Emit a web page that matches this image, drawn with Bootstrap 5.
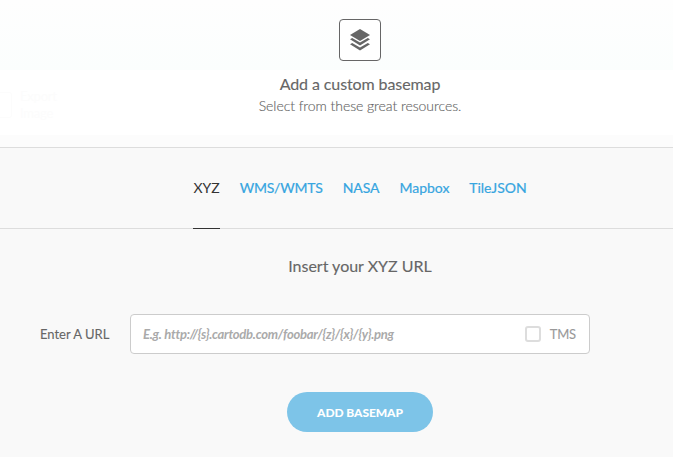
<!DOCTYPE html>
<html lang="en">
<head>
<meta charset="utf-8">
<meta name="viewport" content="width=device-width, initial-scale=1">
<title>Add a custom basemap</title>
<link href="https://cdn.jsdelivr.net/npm/bootstrap@5.3.0/dist/css/bootstrap.min.css" rel="stylesheet">
<style>
body{font-family:Lato,sans-serif;background:#f9f9f9;color:#666}
.dialog-head{height:148px;border-bottom:1px solid #ddd;padding:19px 0 0 47px;background:linear-gradient(#fefefe 0,#fbfefd 70px,#fff 70px,#fff 135px,#fcfcfc 135px)}
.head-icon{width:42px;height:42px;border:1px solid #666;border-radius:4px;background:#fff}
.head-title{font-size:16px;line-height:22px;margin:12px 0 0;font-weight:400;letter-spacing:-.1px;-webkit-text-stroke:.12px}
.head-sub{font-size:14px;line-height:20px;font-weight:300;margin:1px 0 0;letter-spacing:-.06px;-webkit-text-stroke:.15px}
.ghost{left:0;top:88px;font-size:13px;line-height:17px;color:#fcfcfc;letter-spacing:-.2px}
.ghost-box{width:12px;height:26px;border:1px solid #fcfcfc;border-left:0;border-radius:0 3px 3px 0}
.tabs{height:81px;border-bottom:1px solid #ddd;gap:20px;padding-left:47px}
.tabs .nav-link{height:81px;line-height:20px;padding:30px 0 0;font-size:14px;color:#36a5e0;border-bottom:1px solid transparent;letter-spacing:-.04px;-webkit-text-stroke:.2px}
.tabs .nav-link.active{color:#333;border-bottom-color:#333;letter-spacing:0;-webkit-text-stroke:0}
.tabs .nav-link.wide{letter-spacing:-.22px}
.section-title{font-size:16px;line-height:22px;margin:26px 0 0;padding-left:47px;font-weight:400;-webkit-text-stroke:.12px}
.url-row{margin:37px 0 0 40px}
.url-label{width:90px;font-size:13px;padding-top:2px;-webkit-text-stroke:.1px}
.url-field{width:460px;height:40px;border:1px solid #ccc;border-radius:4px;padding:0 13px 0 12px}
.url-field input{font-size:13px;font-style:italic;font-weight:700;min-width:0;outline:0;letter-spacing:-.26px}
.url-field .url-input{padding-top:2px!important}
.url-field input::placeholder{color:#aaa;opacity:1}
.tms{font-size:13px;color:#999;gap:9px;letter-spacing:-.15px;-webkit-text-stroke:.1px}
.tms span{padding-top:2px}
.tms .form-check-input{width:16px;height:16px;border:2px solid #ddd;border-radius:3px;margin:0}
.form-foot{padding:38px 0 0 47px}
.add-btn,.add-btn:hover{width:146px;height:40px;background:#7dc4e8;color:#fff;font-size:12px;font-weight:900;border:0;padding:2px 0 0;letter-spacing:-.08px}
</style>
<script src="https://cdn.jsdelivr.net/npm/bootstrap@5.3.0/dist/js/bootstrap.bundle.min.js"></script>
</head>
<body>
<header class="dialog-head text-center position-relative">
  <div class="ghost position-absolute d-flex align-items-center gap-2 text-start" aria-hidden="true"><span class="ghost-box"></span><span>Export<br>Image</span></div>
  <div class="head-icon d-flex align-items-center justify-content-center mx-auto">
    <svg width="22" height="22" viewBox="0 0 22 22" fill="#666"><path d="M11 0 21 6 11 12 1 6Z"/><path d="M1 10.3 3.2 9 11 13.5 18.8 9 21 10.3 11 16.5Z"/><path d="M1 15.2 3.2 13.9 11 18.5 18.8 13.9 21 15.2 11 21.6Z"/></svg>
  </div>
  <h1 class="head-title">Add a custom basemap</h1>
  <p class="head-sub">Select from these great resources.</p>
</header>
<nav class="tabs nav justify-content-center">
  <a class="nav-link active" href="#">XYZ</a>
  <a class="nav-link wide" href="#">WMS/WMTS</a>
  <a class="nav-link" href="#">NASA</a>
  <a class="nav-link" href="#">Mapbox</a>
  <a class="nav-link" href="#">TileJSON</a>
</nav>
<main>
  <h2 class="section-title text-center">Insert your XYZ URL</h2>
  <form>
    <div class="url-row d-flex align-items-center">
      <label class="url-label" for="url">Enter A URL</label>
      <div class="url-field bg-white d-flex align-items-center">
        <input id="url" class="url-input border-0 p-0 flex-grow-1 bg-transparent" type="text" placeholder="E.g. http://{s}.cartodb.com/foobar/{z}/{x}/{y}.png">
        <label class="tms d-flex align-items-center"><input class="form-check-input" type="checkbox"><span>TMS</span></label>
      </div>
    </div>
    <div class="form-foot text-center"><button type="button" class="add-btn btn rounded-pill">ADD BASEMAP</button></div>
  </form>
</main>
</body>
</html>
